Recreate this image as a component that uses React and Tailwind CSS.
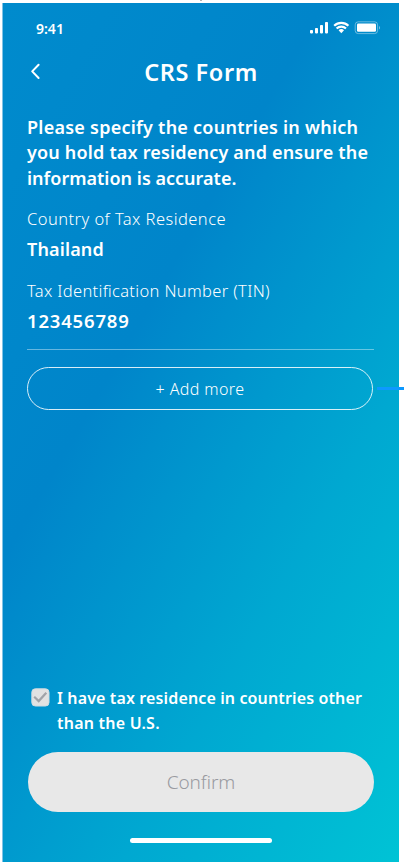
function StatusIcons() {
  return (
    <svg className="h-5 w-[72px]" viewBox="308 18 72 20" fill="none">
      <g fill="white">
        <rect x="310" y="30" width="3" height="3.4" rx=".8" />
        <rect x="315" y="28" width="3" height="5.4" rx=".8" />
        <rect x="320" y="25" width="3" height="8.4" rx=".8" />
        <rect x="325" y="22" width="3" height="11.4" rx=".8" />
        <rect x="357" y="23.6" width="19" height="8.2" rx="1.3" />
        <path d="M338.6 30.2a3.9 3.9 0 0 1 5.4 0L341.3 33.2Z" />
      </g>
      <path d="M334.2 25.8a10.2 10.2 0 0 1 14.2 0M336.6 28.5a6.8 6.8 0 0 1 9.4 0" stroke="white" strokeWidth="2.2" />
      <rect x="355.2" y="21.8" width="22.4" height="11.8" rx="3" stroke="white" strokeOpacity=".4" />
      <path d="M379 26v3.4q1-.4 1-1.7t-1-1.7Z" fill="white" fillOpacity=".5" />
    </svg>
  );
}

function Field({ label, value, labelClass, valueClass }) {
  return (
    <div className="flex h-[72px] flex-col">
      <dt className={"h-[30px] whitespace-nowrap leading-[26px] font-light " + labelClass}>{label}</dt>
      <dd className={"whitespace-nowrap leading-[26px] font-semibold " + valueClass}>{value}</dd>
    </div>
  );
}

export default function App() {
  return (
    <div className="relative h-[866px] w-[404px] overflow-hidden bg-white pt-[3px] pl-[2px] font-['Noto_Sans',sans-serif] text-white [font-feature-settings:'liga']">
      <div className="absolute top-0 left-[200px] h-px w-[2px] bg-[#b5b5b5]" />
      <main className="flex h-[859px] w-[397px] flex-col border-l border-[#80c3e5] bg-[linear-gradient(120deg,#008bcd_0%,#0085ca_36%,#00a8d1_69%,#00c3d5_100%)] px-6">
        <header>
          <div className="flex h-[50px] items-center justify-between pt-[2px] pl-[9px]">
            <span className="text-[14px] leading-5 font-semibold">9:41</span>
            <div className="mt-[-2px] -mr-[5px]"><StatusIcons /></div>
          </div>
          <div className="grid h-[38px] grid-cols-[40px_1fr_40px] items-center">
            <svg className="ml-[3px] h-5 w-[14px]" viewBox="0 0 14 20" fill="none" stroke="white" strokeWidth="2" strokeLinecap="round" strokeLinejoin="round">
              <path d="m8.6 2.8-6.4 6.6 6.4 6.6" />
            </svg>
            <h1 className="text-center text-[23.5px] leading-8 font-semibold tracking-[0.58px] whitespace-nowrap">CRS Form</h1>
          </div>
        </header>
        <p className="mt-[24px] flex flex-col text-[18px] leading-[25.3px] font-semibold whitespace-nowrap">
          <span className="tracking-[0.25px]">Please specify the countries in which</span>
          <span className="tracking-[0.18px]">you hold tax residency and ensure the</span>
          <span className="tracking-[0.01px]">information is accurate.</span>
        </p>
        <dl className="mt-[15.6px]">
          <Field label="Country of Tax Residence" value="Thailand" labelClass="text-[16.5px] tracking-[0.45px]" valueClass="text-[18px] tracking-[0.15px]" />
          <Field label="Tax Identification Number (TIN)" value="123456789" labelClass="text-[16.5px] tracking-[0.34px]" valueClass="text-[18.5px] tracking-[0.82px]" />
        </dl>
        <hr className="-mt-px w-[347px] border-white/40" />
        <button className="mt-[17px] flex h-[43px] w-[346px] items-center justify-center rounded-full border border-white/85 pt-px text-[16px] font-light tracking-[0.4px]">+ Add more</button>
        <label className="mt-auto flex h-[66px] gap-2 pl-1">
          <svg className="mt-[2px] h-[19px] w-[19px]" viewBox="0 0 19 19" fill="none">
            <rect x=".8" y=".8" width="17.2" height="17.2" rx="3.5" fill="#e2e2e2" stroke="#cfdbe1" />
            <path d="m3.2 8.8 4.5 4.3 7.6-8.3" stroke="#a1a3a8" strokeWidth="2.2" />
          </svg>
          <span className="-ml-px flex flex-col text-[16px] leading-[25px] font-semibold whitespace-nowrap">
            <span className="tracking-[0.13px]">I have tax residence in countries other</span>
            <span className="tracking-[0.22px]">than the U.S.</span>
          </span>
        </label>
        <button className="ml-px flex h-[60px] w-[346px] shrink-0 items-center justify-center rounded-full bg-[#e8e8e8] pt-px text-[19px] font-light tracking-[-0.1px] text-[#999aa0]">Confirm</button>
        <div className="mt-[26px] mb-[19px] ml-[103px] h-[5px] w-[142px] shrink-0 rounded-full bg-white" />
      </main>
      <div className="absolute top-[387px] left-[377px] h-[3px] w-[27px] bg-[#0d99ff]" />
    </div>
  );
}
